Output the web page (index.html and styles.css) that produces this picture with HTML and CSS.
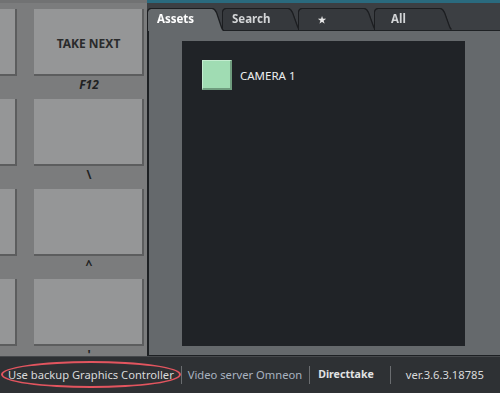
FILE: index.html
```html
<!DOCTYPE html>
<html>
<head>
<meta charset="utf-8">
<link rel="stylesheet" href="styles.css">
</head>
<body>
<div class="app">
  <div class="main">
    <div class="keys">
      <div class="cell"><div class="key"></div><div class="key-label"></div></div>
      <div class="cell"><div class="key">TAKE NEXT</div><div class="key-label fkey">F12</div></div>
      <div class="cell"><div class="key"></div><div class="key-label"></div></div>
      <div class="cell"><div class="key"></div><div class="key-label">\</div></div>
      <div class="cell"><div class="key"></div><div class="key-label"></div></div>
      <div class="cell"><div class="key"></div><div class="key-label">^</div></div>
      <div class="cell"><div class="key"></div><div class="key-label"></div></div>
      <div class="cell"><div class="key"></div><div class="key-label">'</div></div>
    </div>
    <div class="right">
      <div class="tabbar">
        <span class="tab tab-active"><span class="tab-shape">Assets</span></span>
        <span class="tab"><span class="tab-shape">Search</span></span>
        <span class="tab"><span class="tab-shape tab-star">★</span></span>
        <span class="tab"><span class="tab-shape tab-all">All</span></span>
      </div>
      <div class="content">
        <div class="assets">
          <div class="asset"><span class="swatch"></span><span class="asset-name">CAMERA 1</span></div>
        </div>
      </div>
    </div>
  </div>
  <div class="status">
    <span class="st st-backup">Use backup Graphics Controller<span class="ring"></span></span>
    <span class="sep"></span>
    <span class="st st-server">Video server Omneon</span>
    <span class="sep"></span>
    <span class="st st-mode">Directtake</span>
    <span class="sep"></span>
    <span class="st st-ver">ver.3.6.3.18785</span>
  </div>
</div>
</body>
</html>
```

FILE: styles.css
```css
html, body {
  margin: 0;
  padding: 0;
}
body {
  width: 500px;
  height: 393px;
  overflow: hidden;
  background: #2e3134;
  font-family: "Noto Sans", "Open Sans", sans-serif;
}
.app {
  display: flex;
  flex-direction: column;
  width: 500px;
  height: 393px;
}
.main {
  display: flex;
  height: 356px;
  flex: none;
}
.keys {
  width: 147px;
  flex: none;
  height: 356px;
  overflow: hidden;
  box-sizing: border-box;
  background: #7b7c7d;
  border-top: 3px solid #717273;
  padding-top: 6px;
  display: grid;
  grid-template-columns: 17px 110px;
  grid-auto-rows: 90px;
  column-gap: 17px;
}
.cell {
  display: flex;
  flex-direction: column;
}
.key {
  height: 67px;
  flex: none;
  background: #959697;
  box-shadow: inset -2px -2px 0 #5c5d5e;
  display: flex;
  align-items: center;
  justify-content: center;
  font-size: 12px;
  font-weight: 700;
  color: #2a2b2c;
  padding: 2px 1px 0 0;
  box-sizing: border-box;
}
.key-label {
  height: 23px;
  line-height: 17px;
  text-align: center;
  font-size: 12px;
  font-weight: 700;
  color: #202122;
}
.fkey {
  font-style: italic;
}
.right {
  flex: 1;
  display: flex;
  flex-direction: column;
  min-width: 0;
}
.tabbar {
  height: 31px;
  flex: none;
  box-sizing: border-box;
  background: #3c3f43;
  border-top: 3px solid #2a6a7e;
  border-bottom: 1px solid #1e2124;
  padding: 6px 0 0 1px;
  display: flex;
  align-items: flex-end;
}
.tab {
  display: block;
  width: 76px;
  height: 21px;
  flex: none;
  filter: drop-shadow(1px 0 0 #1c1e21) drop-shadow(-1px 0 0 #1c1e21) drop-shadow(0 -1px 0 #1c1e21);
}
.tab-active {
  width: 75px;
  margin-bottom: -1px;
  height: 22px;
  position: relative;
  z-index: 2;
}
.tab-shape {
  display: block;
  height: 100%;
  box-sizing: border-box;
  background: #36393d;
  clip-path: polygon(0 100%, 0 3px, 1px 1px, 3px 0, calc(100% - 11px) 0, calc(100% - 9px) 1px, calc(100% - 7px) 4px, calc(100% - 2px) calc(100% - 3px), calc(100% - 1px) calc(100% - 1px), 100% 100%);
  padding-left: 9px;
  font-size: 11.5px;
  font-weight: 700;
  line-height: 19px;
  color: #d3d5d7;
}
.tab-active .tab-shape {
  background: #65696c;
  color: #ffffff;
}
.tab-star {
  padding-left: 19px;
  font-size: 9px;
  color: #e8e8e8;
  line-height: 22px;
}
.tab-all {
  padding-left: 16px;
}
.content {
  flex: 1;
  background: #65696c;
  border-left: 2px solid #1d2023;
  border-bottom: 1px solid #1d2023;
  padding: 10px 35px 9px 33px;
  display: flex;
  min-height: 0;
}
.assets {
  flex: 1;
  background: #202327;
  padding: 19px 20px;
}
.asset {
  display: flex;
  align-items: center;
  gap: 8px;
}
.swatch {
  width: 30px;
  height: 30px;
  box-sizing: border-box;
  background: #a0dcb3;
  border-top: 1px solid #c4ecd0;
  border-left: 1px solid #c4ecd0;
  border-right: 2px solid #6f9c7e;
  border-bottom: 2px solid #6f9c7e;
}
.asset-name {
  font-size: 11.5px;
  color: #eceeef;
}
.status {
  height: 37px;
  flex: none;
  box-sizing: border-box;
  border-top: 1px solid #46494c;
  background: #2e3134;
  display: flex;
  align-items: center;
  padding: 0 0 1px 8px;
  font-size: 11.2px;
  color: #d9dadb;
}
.st {
  white-space: nowrap;
  line-height: 15px;
}
.st-backup {
  position: relative;
  padding-right: 7px;
}
.ring {
  position: absolute;
  left: -7px;
  right: 0;
  top: -6px;
  bottom: -6px;
  border: 2px solid #e2555f;
  border-radius: 50%;
}
.sep {
  width: 1px;
  height: 18px;
  background: #6a6d70;
  flex: none;
}
.st-server {
  color: #a9b3c0;
  padding: 0 7px 0 6px;
}
.st-mode {
  font-weight: 700;
  font-size: 10.6px;
  color: #e2e3e4;
  padding: 0 16px 0 8px;
}
.st-ver {
  padding-left: 15px;
}
```
